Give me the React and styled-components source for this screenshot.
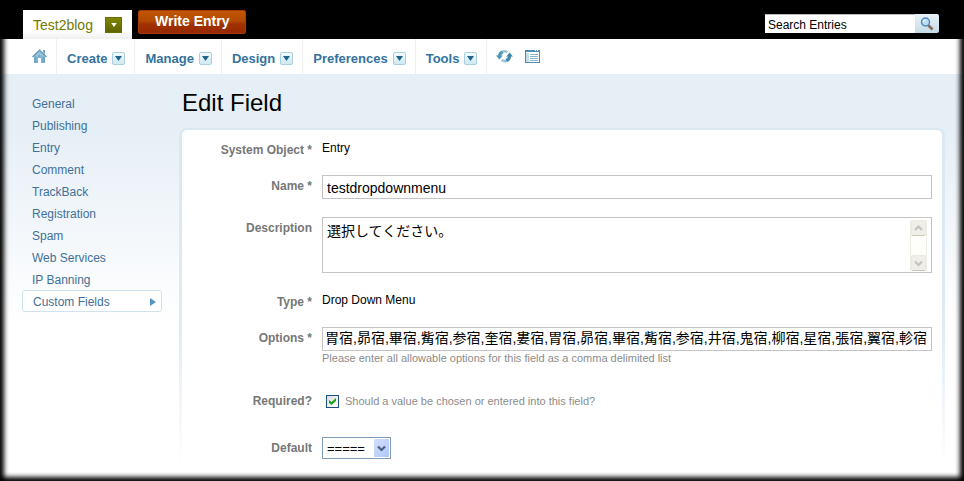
import React, { useEffect, useRef, useState } from 'react';
import styled, { createGlobalStyle } from 'styled-components';

const GlobalStyle = createGlobalStyle`
  * {
    box-sizing: border-box;
  }

  body {
    margin: 0;
    background: #fff;
    color: #000;
    font-family: "Liberation Sans", "Noto Sans CJK JP", sans-serif;
    font-size: 12px;
  }

  button, input, textarea, select {
    font-family: inherit;
    color: inherit;
  }
`;

const Page = styled.div`
  position: relative;
  display: flex;
  flex-direction: column;
  min-height: 100vh;

  /* dark vignette over the edges of the page */
  &::after {
    content: "";
    position: absolute;
    inset: 0;
    pointer-events: none;
    box-shadow: inset 0 0 5px 4px #000;
  }
`;

const TopBar = styled.header`
  display: flex;
  align-items: flex-start;
  gap: 6px;
  height: 39px;
  padding: 10px 25px 0 23px;
  background: #000;
`;

const BlogTab = styled.div`
  display: flex;
  align-items: center;
  justify-content: space-between;
  width: 109px;
  height: 29px;
  padding: 0 10px;
  background: linear-gradient(#fff 70%, #f0f0f0);
`;

const BlogLink = styled.a`
  color: #737a00;
  font-size: 14px;
  text-decoration: none;
`;

const BlogToggle = styled.button`
  display: flex;
  align-items: center;
  justify-content: center;
  width: 17px;
  height: 16px;
  padding: 0;
  border: 1px solid #6a7000;
  background: linear-gradient(#7f8600, #5f6500);
`;

const WriteButton = styled.button`
  height: 24px;
  padding: 0 16px 2px;
  border: 1px solid #a83c00;
  border-radius: 2px;
  background: linear-gradient(#c05600, #b44a00 45%, #a03200 60%, #962800);
  color: #fff;
  font-size: 14px;
  font-weight: bold;
`;

const SearchForm = styled.form`
  display: flex;
  height: 19px;
  margin: 4px 0 0 auto;
`;

const SearchInput = styled.input`
  width: 150px;
  padding: 1px 3px 0;
  border: 0;
  border-top: 1px solid #bbb;
  border-radius: 0;
  background: #fff;
  font-size: 12px;
`;

const SearchButton = styled.button`
  display: flex;
  align-items: center;
  justify-content: center;
  width: 24px;
  padding: 0;
  border: 0;
  border-radius: 0 2px 2px 0;
  background: linear-gradient(#e9f3f8, #c4dbe6);
`;

const NavBar = styled.nav`
  display: flex;
  height: 35px;
  padding-left: 32px;
  background: #fff;
`;

const NavIcon = styled.a`
  display: flex;
  padding-top: 10px;
  margin-right: ${(props) => props.$gap}px;
`;

const NavItem = styled.div`
  display: flex;
  align-items: center;
  gap: 5px;
  padding: 4px 9px 0 10px;
  border-left: 1px solid #eee;
`;

const NavLink = styled.a`
  color: #33739e;
  font-size: 13px;
  font-weight: bold;
  text-decoration: none;
`;

const NavToggle = styled.button`
  display: flex;
  align-items: center;
  justify-content: center;
  width: 13px;
  height: 13px;
  padding: 0;
  border: 1px solid #a9cfdf;
  border-radius: 2px;
  background: linear-gradient(#f4fbfd, #cfe9f3);
`;

const NavTail = styled.div`
  display: flex;
  padding-left: 9px;
  border-left: 1px solid #eee;
`;

const Body = styled.div`
  flex: 1;
  display: flex;
  gap: 17px;
  padding: 0 19px 0 22px;
  background: linear-gradient(#e6eef6, #e7eff6 60px, #fff 250px);
`;

const Sidebar = styled.nav`
  flex: 0 0 140px;
  padding-top: 18px;
`;

const SideLink = styled.a`
  display: flex;
  align-items: center;
  justify-content: space-between;
  height: 22px;
  padding: 1px 5px 0 ${(props) => (props.$active ? 10 : 9)}px;
  border: 1px solid ${(props) => (props.$active ? '#cfe2ee' : 'transparent')};
  border-radius: 3px;
  background: ${(props) => (props.$active ? '#fff' : 'transparent')};
  color: #3f7199;
  font-size: 12px;
  text-decoration: none;
`;

const Main = styled.main`
  flex: 1;
  display: flex;
  flex-direction: column;
  min-width: 0;
`;

const Title = styled.h1`
  margin: 0;
  padding: 15px 0 11px 3px;
  font-size: 24px;
  font-weight: normal;
  line-height: 28px;
`;

const CardEdge = styled.div`
  flex: 1;
  display: flex;
  padding: 2px 3px 0;
  border-radius: 8px 8px 0 0;
  background: linear-gradient(#d9e8f2, #dfebf6 200px, #fff 340px);
`;

const Card = styled.form`
  flex: 1;
  display: flex;
  flex-direction: column;
  gap: 18px;
  min-width: 0;
  padding: 9px 10px 22px 0;
  border-radius: 5px 5px 0 0;
  background: #fff;
`;

const Row = styled.div`
  display: grid;
  grid-template-columns: 130px 1fr;
  column-gap: 10px;
  align-items: ${(props) => (props.$middle ? 'center' : 'start')};
  min-height: ${(props) => (props.$middle ? 36 : 18)}px;
`;

const Label = styled.label`
  padding-top: ${(props) => (props.$middle ? 0 : 4)}px;
  color: #777;
  font-size: 12px;
  font-weight: bold;
  line-height: 14px;
  text-align: right;
`;

const Value = styled.output`
  line-height: 18px;
`;

const TextInput = styled.input`
  display: block;
  width: 100%;
  height: 24px;
  padding: ${(props) => (props.$cjk ? '0 4px 4px' : '1px 4px 0')};
  border: 1px solid #c4c4c4;
  border-radius: 0;
  background: #fff;
  font-size: 14px;
`;

const TextAreaBox = styled.div`
  display: flex;
  height: 56px;
  padding: 2px 4px 1px 0;
  border: 1px solid #c4c4c4;
  background: #fff;
`;

const TextArea = styled.textarea`
  flex: 1;
  padding: 1px 4px;
  border: 0;
  background: transparent;
  font-size: 14px;
  line-height: 20px;
  outline: none;
  overflow: hidden;
  resize: none;
`;

const Scrollbar = styled.div`
  display: flex;
  flex-direction: column;
  justify-content: space-between;
  width: 17px;
  border: solid #eeede5;
  border-width: 0 1px;
  background: #fefefa;
`;

const ScrollButton = styled.button`
  display: flex;
  align-items: center;
  justify-content: center;
  height: 16px;
  padding: 0;
  border: 1px solid #eceae0;
  border-bottom-color: #c9c9b8;
  border-radius: 2px;
  background: #efeee9;
`;

const Hint = styled.div`
  color: #8c8c8c;
  font-size: 11px;
  line-height: 14px;
`;

const CheckLine = styled.label`
  display: flex;
  align-items: center;
  gap: 6px;
  padding-left: 4px;
  color: #8c8c8c;
  font-size: 11px;
`;

const CheckWrap = styled.span`
  position: relative;
  display: flex;

  svg {
    position: absolute;
    top: 3px;
    left: 3px;
    pointer-events: none;
  }
`;

const CheckBox = styled.input`
  appearance: none;
  width: 13px;
  height: 13px;
  margin: 0;
  border: 1px solid #1c5180;
  background: linear-gradient(135deg, #dfdfda, #fff);
`;

const SelectWrap = styled.div`
  position: relative;
  width: 69px;
`;

const Select = styled.select`
  appearance: none;
  display: block;
  width: 100%;
  height: 22px;
  padding: 0 18px 0 4px;
  border: 1px solid #7f9db9;
  border-radius: 0;
  background: #fff;
  font-size: 13px;
`;

const SelectArrow = styled.span`
  position: absolute;
  top: 2px;
  right: 2px;
  bottom: 2px;
  display: flex;
  align-items: center;
  justify-content: center;
  width: 15px;
  border-radius: 1px;
  background: linear-gradient(135deg, #d3e0fd, #b0c7f8);
  pointer-events: none;
`;

const menus = ['Create', 'Manage', 'Design', 'Preferences', 'Tools'];

const sections = [
  'General',
  'Publishing',
  'Entry',
  'Comment',
  'TrackBack',
  'Registration',
  'Spam',
  'Web Services',
  'IP Banning',
  'Custom Fields',
];

const mansions =
  '胃宿,昴宿,畢宿,觜宿,参宿,奎宿,婁宿,胃宿,昴宿,畢宿,觜宿,参宿,井宿,鬼宿,柳宿,星宿,張宿,翼宿,軫宿';

const DownTriangle = ({ color, size = 7 }) => (
  <svg width={size} height={size - 2} viewBox="0 0 7 5">
    <path d="M0 0h7L3.5 5z" fill={color} />
  </svg>
);

const HomeIcon = () => (
  <svg width="15" height="15" viewBox="0 0 15 15">
    <path d="M11 1h2v4l-2-2z" fill="#6fa3c4" />
    <path d="M2 7.5L7.5 2.5 13 7.5V14H9V9H6v5H2z" fill="#7fb2d2" />
    <path d="M0.5 8L7.5 1.2 14.5 8" fill="none" stroke="#6496b8" strokeWidth="1.5" />
    <path d="M3 8v5.5M12 8v5.5" stroke="#5f97bd" />
    <path d="M4 7.5L7.5 4.3 11 7.5" fill="none" stroke="#b5d7e8" />
  </svg>
);

const RefreshIcon = () => (
  <svg width="17" height="15" viewBox="0 0 17 15">
    <path d="M3.5 7.500A5 5 0 0 1 7 2.700" fill="none" stroke="#4f96b8" strokeWidth="3" />
    <path d="M6.500 2.700A5 5 0 0 1 11.500 3.300" fill="none" stroke="#9cc6da" strokeWidth="2.600" />
    <path d="M13.500 6.500A5 5 0 0 1 10 11.700" fill="none" stroke="#3f86ab" strokeWidth="3" />
    <path d="M10.500 11.700A5 5 0 0 1 5.500 11" fill="none" stroke="#9cc6da" strokeWidth="2.600" />
    <path d="M0 6.500h6.800L3.400 10.500z" fill="#4f96b8" />
    <path d="M10.200 7.500H17L13.600 3.500z" fill="#3f86ab" />
  </svg>
);

const ListIcon = () => (
  <svg width="15" height="14" viewBox="0 0 15 14">
    <rect x="0.500" y="1.500" width="14" height="12" fill="#fff" stroke="#4b8cb0" />
    <rect x="0" y="1" width="15" height="2" fill="#4b8cb0" />
    <path d="M10 1.500h1M12 1.500h1" stroke="#fff" />
    <rect x="1" y="4" width="3" height="9" fill="#c2deea" />
    <path d="M5 5.500h8M5 7.500h8M5 9.500h8M5 11.500h8" stroke="#86b5cd" />
  </svg>
);

const SearchIcon = () => (
  <svg width="14" height="14" viewBox="0 0 14 14">
    <path d="M8 8l4.500 4.500" stroke="#8f6b55" strokeWidth="2.600" />
    <circle cx="5.500" cy="5" r="4" fill="#b9dcf5" stroke="#4f87bd" strokeWidth="1.400" />
    <path d="M3.500 5a2 2 0 0 1 2-2" fill="none" stroke="#fff" />
  </svg>
);

const Chevron = ({ up, color }) => (
  <svg width="9" height="7" viewBox="0 0 9 7">
    <path d={up ? 'M1 5l3.500-3.500L8 5' : 'M1 1.500L4.500 5 8 1.500'} fill="none" stroke={color} strokeWidth="2.200" />
  </svg>
);

const App = () => {
  const [search, setSearch] = useState('Search Entries');
  const [name, setName] = useState('testdropdownmenu');
  const [description, setDescription] = useState('選択してください。');
  const [options, setOptions] = useState(mansions);
  const [required, setRequired] = useState(true);
  const optionsRef = useRef(null);

  // keep the end of the options list in view
  useEffect(() => {
    optionsRef.current.scrollLeft = optionsRef.current.scrollWidth;
  }, []);

  return (
    <>
      <GlobalStyle />
      <Page>
        <TopBar>
          <BlogTab>
            <BlogLink href="#blog">Test2blog</BlogLink>
            <BlogToggle type="button" aria-label="Choose blog">
              <DownTriangle color="#fff" size={6} />
            </BlogToggle>
          </BlogTab>
          <WriteButton type="button">Write Entry</WriteButton>
          <SearchForm onSubmit={(e) => e.preventDefault()}>
            <SearchInput
              aria-label="Search Entries"
              value={search}
              onChange={(e) => setSearch(e.target.value)}
            />
            <SearchButton aria-label="Search">
              <SearchIcon />
            </SearchButton>
          </SearchForm>
        </TopBar>

        <NavBar>
          <NavIcon href="#home" aria-label="Home" $gap={9}>
            <HomeIcon />
          </NavIcon>
          {menus.map((menu) => (
            <NavItem key={menu}>
              <NavLink href={`#${menu}`}>{menu}</NavLink>
              <NavToggle type="button" aria-label={`${menu} menu`}>
                <DownTriangle color="#22638c" />
              </NavToggle>
            </NavItem>
          ))}
          <NavTail>
            <NavIcon href="#rebuild" aria-label="Rebuild" $gap={12}>
              <RefreshIcon />
            </NavIcon>
            <NavIcon href="#view" aria-label="View site" $gap={0}>
              <ListIcon />
            </NavIcon>
          </NavTail>
        </NavBar>

        <Body>
          <Sidebar>
            {sections.map((section) => (
              <SideLink key={section} href={`#${section}`} $active={section === 'Custom Fields'}>
                {section}
                {section === 'Custom Fields' && (
                  <svg width="6" height="8" viewBox="0 0 6 8">
                    <path d="M0 0l6 4-6 4z" fill="#5595c4" />
                  </svg>
                )}
              </SideLink>
            ))}
          </Sidebar>

          <Main>
            <Title>Edit Field</Title>
            <CardEdge>
              <Card onSubmit={(e) => e.preventDefault()}>
                <Row>
                  <Label htmlFor="system-object">System Object *</Label>
                  <Value id="system-object">Entry</Value>
                </Row>
                <Row>
                  <Label htmlFor="name">Name *</Label>
                  <TextInput id="name" value={name} onChange={(e) => setName(e.target.value)} />
                </Row>
                <Row>
                  <Label htmlFor="description">Description</Label>
                  <TextAreaBox>
                    <TextArea
                      id="description"
                      value={description}
                      onChange={(e) => setDescription(e.target.value)}
                    />
                    <Scrollbar>
                      <ScrollButton type="button" aria-label="Scroll up" disabled>
                        <Chevron up color="#c5c4bc" />
                      </ScrollButton>
                      <ScrollButton type="button" aria-label="Scroll down" disabled>
                        <Chevron color="#c5c4bc" />
                      </ScrollButton>
                    </Scrollbar>
                  </TextAreaBox>
                </Row>
                <Row>
                  <Label htmlFor="type">Type *</Label>
                  <Value id="type">Drop Down Menu</Value>
                </Row>
                <Row>
                  <Label htmlFor="options">Options *</Label>
                  <div>
                    <TextInput
                      id="options"
                      ref={optionsRef}
                      $cjk
                      value={options}
                      onChange={(e) => setOptions(e.target.value)}
                    />
                    <Hint>Please enter all allowable options for this field as a comma delimited list</Hint>
                  </div>
                </Row>
                <Row $middle>
                  <Label htmlFor="required" $middle>Required?</Label>
                  <CheckLine>
                    <CheckWrap>
                      <CheckBox
                        id="required"
                        type="checkbox"
                        checked={required}
                        onChange={(e) => setRequired(e.target.checked)}
                      />
                      {required && (
                        <svg width="7" height="7" viewBox="0 0 7 7">
                          <path d="M0 2v3l2.500 2L7 3V0L2.500 4z" fill="#21a121" />
                        </svg>
                      )}
                    </CheckWrap>
                    Should a value be chosen or entered into this field?
                  </CheckLine>
                </Row>
                <Row>
                  <Label htmlFor="default">Default</Label>
                  <SelectWrap>
                    <Select id="default">
                      <option>=====</option>
                    </Select>
                    <SelectArrow>
                      <Chevron color="#4d6185" />
                    </SelectArrow>
                  </SelectWrap>
                </Row>
              </Card>
            </CardEdge>
          </Main>
        </Body>
      </Page>
    </>
  );
};

export default App;
